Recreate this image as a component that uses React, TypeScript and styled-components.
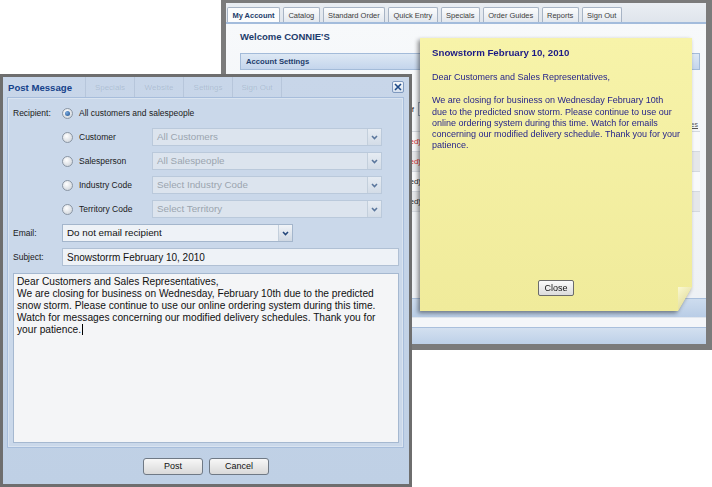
import React from 'react';
import styled, { createGlobalStyle } from 'styled-components';

const GlobalStyle = createGlobalStyle`
  html, body { margin: 0; padding: 0; background: #ffffff; }
  body {
    width: 712px; height: 487px; overflow: hidden;
    font-family: "Liberation Sans", Arial, sans-serif;
  }
  * { box-sizing: border-box; }
`;

const Desktop = styled.div`
  position: relative;
  width: 712px;
  height: 487px;
  background: #ffffff;
  overflow: hidden;
`;

/* ---------- Background web app window ---------- */
const BackWindow = styled.div`
  position: absolute;
  left: 221px;
  top: 0;
  width: 491px;
  height: 350px;
  border: solid #7b7b7b;
  border-width: 3px 6px 6px 5px;
  background: #f1f4f8;
  display: flex;
  flex-direction: column;
  overflow: hidden;
`;

const TabBar = styled.div`
  display: flex;
  align-items: flex-end;
  gap: 3px;
  height: 21px;
  padding-left: 1px;
  background: linear-gradient(#eaeef3, #dfe5ec);
  border-bottom: 2px solid #a3bcdc;
`;

const Tab = styled.div<{ $active?: boolean }>`
  height: 15px;
  padding: 0 4.4px;
  display: flex;
  align-items: center;
  font-size: 7.5px;
  white-space: nowrap;
  color: ${p => (p.$active ? '#1d3c6b' : '#3c3c3c')};
  font-weight: ${p => (p.$active ? 700 : 400)};
  border: 1px solid #a7b4c5;
  border-bottom: none;
  border-radius: 2px 2px 0 0;
  background: ${p => (p.$active ? '#fbfcfd' : 'linear-gradient(#fbfcfd, #e2e7ee)')};
`;

const WindowContent = styled.div`
  flex: 1;
  display: flex;
  flex-direction: column;
  padding: 7px 6px 0 14px;
  background: linear-gradient(#f7f9fb, #eef1f5);
`;

const Welcome = styled.div`
  font-size: 9.5px;
  font-weight: 700;
  line-height: 12px;
  color: #1d3c6b;
  margin-bottom: 10px;
`;

const SettingsBar = styled.div`
  height: 17px;
  display: flex;
  align-items: center;
  padding-left: 5px;
  font-size: 7.7px;
  font-weight: 700;
  color: #1d3c6b;
  border: 1px solid #a3bbd9;
  background: linear-gradient(#dde8f4, #c4d5ec);
`;

const FilterRow = styled.div`
  margin-top: 30px;
  height: 18px;
  display: flex;
  align-items: center;
  font-size: 8px;
  color: #222;
`;

const FilterLabel = styled.span`
  width: 174px;
  text-align: right;
  margin-right: 4px;
`;

const FilterInput = styled.span`
  width: 24px;
  height: 14px;
  border: 1px solid #9aa6b4;
  background: #ffffff;
`;

const HeaderRow = styled.div`
  height: 14px;
  display: flex;
  align-items: center;
  justify-content: flex-end;
  padding-right: 2px;
  border-bottom: 1px solid #d3d8df;
`;

const HeaderLink = styled.span`
  font-size: 7px;
  color: #555;
  text-decoration: underline;
`;

const DataRow = styled.div<{ $shade?: boolean }>`
  height: 20px;
  display: grid;
  grid-template-columns: 100px 81px 1fr;
  align-items: center;
  font-size: 8px;
  background: ${p => (p.$shade ? '#e5e7ea' : '#f8f9fb')};
  border-bottom: 1px solid #d3d8df;
`;

const RowName = styled.span`
  padding-left: 4px;
  color: #222;
`;

const RowStatus = styled.span<{ $alert?: boolean }>`
  text-align: right;
  white-space: nowrap;
  color: ${p => (p.$alert ? '#d42b2b' : '#222')};
`;

const Footer = styled.div`
  display: flex;
  flex-direction: column;
`;

const FooterBand = styled.div<{ $h: number; $tone: 'blue' | 'white' | 'light' }>`
  height: ${p => p.$h}px;
  background: ${p =>
    p.$tone === 'blue'
      ? 'linear-gradient(#cddcee, #b9cde6)'
      : p.$tone === 'light'
      ? 'linear-gradient(#d3e0f0, #bdd0e8)'
      : '#f4f6f9'};
  border-top: 1px solid ${p => (p.$tone === 'white' ? '#e0e6ee' : '#a9bfdc')};
`;

/* ---------- Sticky note ---------- */
const NoteWrap = styled.div`
  position: absolute;
  left: 420px;
  top: 38px;
  width: 272px;
  height: 273px;
  filter: drop-shadow(-2px 2px 2px rgba(0, 0, 0, 0.45));
`;

const Note = styled.div`
  position: relative;
  width: 100%;
  height: 100%;
  background: linear-gradient(#f7f3a9, #f0eb9b);
  clip-path: polygon(0 0, 100% 0, 100% calc(100% - 24px), calc(100% - 14px) 100%, 0 100%);
  display: flex;
  flex-direction: column;
  padding: 9px 12px 15px 12px;
  color: #26248a;
`;

const NoteFold = styled.div`
  position: absolute;
  right: 0;
  bottom: 0;
  width: 14px;
  height: 24px;
  clip-path: polygon(0 0, 100% 0, 0 100%);
  background: linear-gradient(135deg, #fbf9d2, #d7d187);
`;

const NoteTitle = styled.div`
  font-size: 9.7px;
  font-weight: 700;
  line-height: 12px;
  color: #1c1a86;
`;

const NoteGreeting = styled.div`
  margin-top: 13px;
  font-size: 9px;
  line-height: 11.3px;
`;

const NoteBody = styled.div`
  margin-top: 12px;
  font-size: 9px;
  line-height: 11.2px;
`;

const NoteLine = styled.div`
  white-space: nowrap;
`;

const NoteClose = styled.button`
  margin-top: auto;
  align-self: center;
  width: 36px;
  height: 16px;
  padding: 0;
  font-family: "Liberation Sans", Arial, sans-serif;
  font-size: 9px;
  color: #111;
  border: 1px solid #6b6b6b;
  border-radius: 2px;
  background: linear-gradient(#fafafa, #dcdcdc);
`;

/* ---------- Post Message dialog ---------- */
const Dialog = styled.div`
  position: absolute;
  left: 0;
  top: 74px;
  width: 412px;
  height: 413px;
  border: 3px solid #6e6e6e;
  background: linear-gradient(#c8d6e9, #bfd0e5);
  display: flex;
  flex-direction: column;
`;

const TitleBar = styled.div`
  position: relative;
  height: 20px;
  flex: none;
  display: flex;
  align-items: center;
  justify-content: space-between;
  padding: 0 5px;
`;

const GhostTabs = styled.div`
  position: absolute;
  left: 82px;
  top: 0;
  height: 20px;
  display: flex;
  border-left: 1px solid rgba(90, 110, 140, 0.15);
`;

const GhostTab = styled.span`
  width: 49px;
  height: 20px;
  display: flex;
  align-items: center;
  justify-content: center;
  font-size: 8px;
  color: rgba(70, 90, 120, 0.2);
  border-right: 1px solid rgba(90, 110, 140, 0.15);
`;

const Title = styled.span`
  position: relative;
  font-size: 9.6px;
  font-weight: 700;
  color: #15428b;
`;

const CloseBox = styled.span`
  position: relative;
  width: 12px;
  height: 12px;
  display: flex;
  align-items: center;
  justify-content: center;
  border: 1px solid #7f99bf;
  border-radius: 2px;
  background: linear-gradient(#f6f8fb, #d5e0ee);
`;

const Body = styled.div`
  flex: 1;
  margin: 0 5px 0 4px;
  display: flex;
  flex-direction: column;
  gap: 6px;
  padding: 6px 4px 4px 5px;
  border: 1px solid #a7bddb;
  background: #cad8ea;
  box-shadow: inset 0 0 0 1px rgba(255, 255, 255, 0.3);
`;

const FormRow = styled.div`
  height: 18px;
  flex: none;
  display: grid;
  grid-template-columns: 49px 1fr;
  align-items: center;
`;

const Label = styled.span`
  font-size: 8.5px;
  color: #1a1a1a;
`;

const RadioOption = styled.div`
  display: flex;
  align-items: center;
`;

const Radio = styled.span<{ $checked?: boolean }>`
  width: 11px;
  height: 11px;
  flex: none;
  margin-right: 6px;
  border-radius: 50%;
  border: 1px solid #8a96a4;
  background: radial-gradient(circle at 40% 35%, #ffffff, #d2d7dd 80%);
  display: inline-flex;
  align-items: center;
  justify-content: center;
  &::after {
    content: '';
    width: 5px;
    height: 5px;
    border-radius: 50%;
    background: radial-gradient(circle at 35% 35%, #7aaae0, #1b4e8a);
    display: ${p => (p.$checked ? 'block' : 'none')};
  }
`;

const RadioLabel = styled.span`
  width: 73px;
  flex: none;
  font-size: 8.5px;
  color: #1a1a1a;
  white-space: nowrap;
`;

const SelectBox = styled.div<{ $width: number; $disabled?: boolean }>`
  width: ${p => p.$width}px;
  height: 18px;
  display: flex;
  border: 1px solid ${p => (p.$disabled ? '#bac9db' : '#a4b6cc')};
  background: ${p => (p.$disabled ? '#dce4ee' : '#eef2f7')};
`;

const SelectText = styled.span<{ $disabled?: boolean }>`
  flex: 1;
  padding-left: 4px;
  font-size: 9.8px;
  line-height: 16px;
  color: ${p => (p.$disabled ? '#9ba4ae' : '#111111')};
  white-space: nowrap;
  overflow: hidden;
`;

const SelectArrow = styled.span<{ $disabled?: boolean }>`
  width: 14px;
  flex: none;
  display: flex;
  align-items: center;
  justify-content: center;
  border-left: 1px solid #c3cfdc;
  background: ${p =>
    p.$disabled ? 'linear-gradient(#e6ecf3, #d3dce7)' : 'linear-gradient(#f1f4f8, #cfd8e3)'};
`;

const TextInput = styled.input`
  width: 100%;
  height: 18px;
  margin: 0;
  padding: 0 4px;
  border: 1px solid #b0c0d4;
  background: #eef2f7;
  font-family: "Liberation Sans", Arial, sans-serif;
  font-size: 10px;
  color: #111;
  outline: none;
`;

const MessageArea = styled.div`
  flex: 1;
  margin-top: 1px;
  padding: 2px 3px;
  border: 1px solid #a5b8d0;
  background: #f4f5f7;
  font-size: 10.2px;
  line-height: 12px;
  color: #111;
`;

const MessageLine = styled.div`
  white-space: nowrap;
`;

const Caret = styled.span`
  display: inline-block;
  width: 1px;
  height: 11px;
  margin-left: 1px;
  vertical-align: -2px;
  background: #000;
`;

const ButtonRow = styled.div`
  height: 36px;
  flex: none;
  display: flex;
  align-items: center;
  justify-content: center;
  gap: 6px;
`;

const DialogButton = styled.button`
  width: 60px;
  height: 17px;
  padding: 0;
  font-family: "Liberation Sans", Arial, sans-serif;
  font-size: 9px;
  color: #111;
  border: 1px solid #6f7985;
  border-radius: 3px;
  background: linear-gradient(#f7f7f7, #d9d9d9);
`;

const Chevron = ({ disabled }: { disabled?: boolean }) => (
  <svg width="7" height="5" viewBox="0 0 7 5">
    <path d="M1 1 L3.5 3.6 L6 1" fill="none" stroke={disabled ? '#5a769c' : '#23467a'} strokeWidth="1.5" />
  </svg>
);

const Select = ({ width, text, disabled }: { width: number; text: string; disabled?: boolean }) => (
  <SelectBox $width={width} $disabled={disabled}>
    <SelectText $disabled={disabled}>{text}</SelectText>
    <SelectArrow $disabled={disabled}>
      <Chevron disabled={disabled} />
    </SelectArrow>
  </SelectBox>
);

const tabs = ['My Account', 'Catalog', 'Standard Order', 'Quick Entry', 'Specials', 'Order Guides', 'Reports', 'Sign Out'];

const rows = [
  { name: 'Sales Rep 1', status: '(Not Activated)', alert: true, shade: false },
  { name: 'Sales Rep 2', status: '(Not Activated)', alert: true, shade: true },
  { name: 'Sales Rep 3', status: '(Activated)', alert: false, shade: false },
  { name: 'Sales Rep 4', status: '(Activated)', alert: false, shade: true },
];

const recipientOptions = [
  { label: 'Customer', select: 'All Customers' },
  { label: 'Salesperson', select: 'All Salespeople' },
  { label: 'Industry Code', select: 'Select Industry Code' },
  { label: 'Territory Code', select: 'Select Territory' },
];

const messageLines = [
  'Dear Customers and Sales Representatives,',
  'We are closing for business on Wednesday, February 10th due to the predicted',
  'snow storm. Please continue to use our online ordering system during this time.',
  'Watch for messages concerning our modified delivery schedules. Thank you for',
];

const noteLines = [
  'We are closing for business on Wednesday February 10th',
  'due to the predicted snow storm. Please continue to use our',
  'online ordering system during this time. Watch for emails',
  'concerning our modified delivery schedule. Thank you for your',
  'patience.',
];

export default function App() {
  return (
    <Desktop>
      <GlobalStyle />
      <BackWindow>
        <TabBar>
          {tabs.map((t, i) => (
            <Tab key={t} $active={i === 0}>
              {t}
            </Tab>
          ))}
        </TabBar>
        <WindowContent>
          <Welcome>Welcome CONNIE'S</Welcome>
          <SettingsBar>Account Settings</SettingsBar>
          <FilterRow>
            <FilterLabel>Show page 1 of</FilterLabel>
            <FilterInput />
          </FilterRow>
          <HeaderRow>
            <HeaderLink>Sales</HeaderLink>
          </HeaderRow>
          {rows.map(r => (
            <DataRow key={r.name} $shade={r.shade}>
              <RowName>{r.name}</RowName>
              <RowStatus $alert={r.alert}>{r.status}</RowStatus>
              <span />
            </DataRow>
          ))}
        </WindowContent>
        <Footer>
          <FooterBand $h={19} $tone="blue" />
          <FooterBand $h={10} $tone="white" />
          <FooterBand $h={17} $tone="light" />
        </Footer>
      </BackWindow>

      <NoteWrap>
        <Note>
          <NoteTitle>Snowstorm February 10, 2010</NoteTitle>
          <NoteGreeting>Dear Customers and Sales Representatives,</NoteGreeting>
          <NoteBody>
            {noteLines.map(l => (
              <NoteLine key={l}>{l}</NoteLine>
            ))}
          </NoteBody>
          <NoteClose>Close</NoteClose>
          <NoteFold />
        </Note>
      </NoteWrap>

      <Dialog>
        <TitleBar>
          <GhostTabs>
            {['Specials', 'Website', 'Settings', 'Sign Out'].map(g => (
              <GhostTab key={g}>{g}</GhostTab>
            ))}
          </GhostTabs>
          <Title>Post Message</Title>
          <CloseBox>
            <svg width="8" height="8" viewBox="0 0 8 8">
              <path d="M1 1 L7 7 M7 1 L1 7" stroke="#1f4a87" strokeWidth="1.6" />
            </svg>
          </CloseBox>
        </TitleBar>
        <Body>
          <FormRow>
            <Label>Recipient:</Label>
            <RadioOption>
              <Radio $checked />
              <RadioLabel>All customers and salespeople</RadioLabel>
            </RadioOption>
          </FormRow>
          {recipientOptions.map(o => (
            <FormRow key={o.label}>
              <span />
              <RadioOption>
                <Radio />
                <RadioLabel>{o.label}</RadioLabel>
                <Select width={230} text={o.select} disabled />
              </RadioOption>
            </FormRow>
          ))}
          <FormRow>
            <Label>Email:</Label>
            <Select width={231} text="Do not email recipient" />
          </FormRow>
          <FormRow>
            <Label>Subject:</Label>
            <TextInput defaultValue="Snowstorrm February 10, 2010" />
          </FormRow>
          <MessageArea>
            {messageLines.map(l => (
              <MessageLine key={l}>{l}</MessageLine>
            ))}
            <MessageLine>
              your patience.
              <Caret />
            </MessageLine>
          </MessageArea>
        </Body>
        <ButtonRow>
          <DialogButton>Post</DialogButton>
          <DialogButton>Cancel</DialogButton>
        </ButtonRow>
      </Dialog>
    </Desktop>
  );
}
